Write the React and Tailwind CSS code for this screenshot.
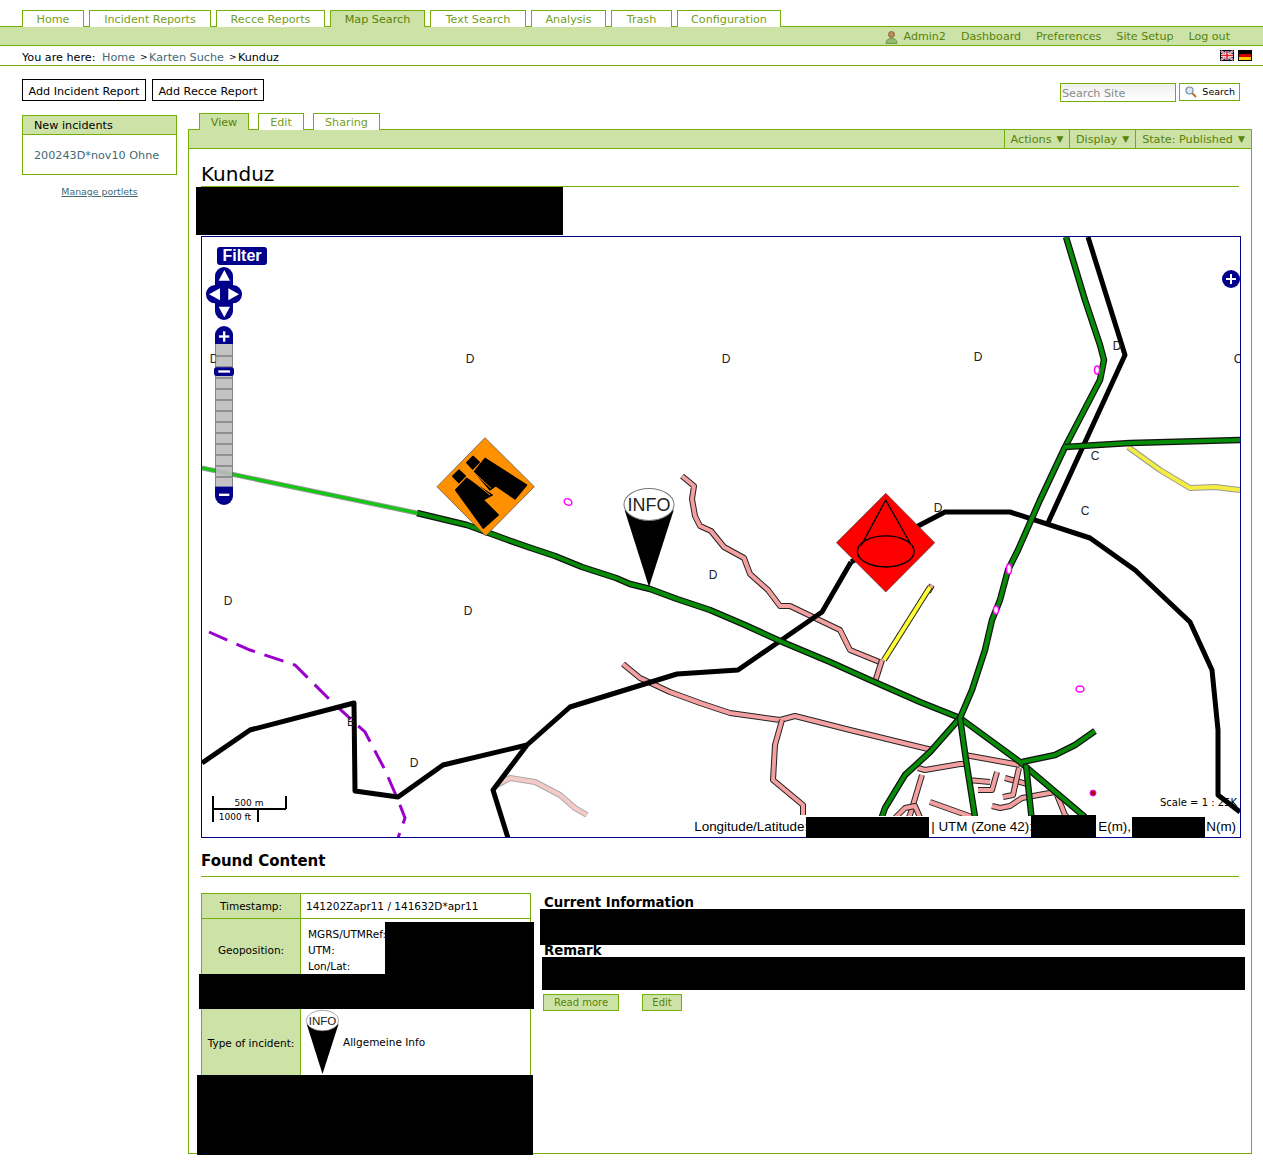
const mainTabs = [
  { label: 'Home', width: 'w-[62px]' },
  { label: 'Incident Reports', width: 'w-[122px]' },
  { label: 'Recce Reports', width: 'w-[109px]' },
  { label: 'Map Search', width: 'w-[95px]', active: true },
  { label: 'Text Search', width: 'w-[96px]' },
  { label: 'Analysis', width: 'w-[75px]' },
  { label: 'Trash', width: 'w-[61px]' },
  { label: 'Configuration', width: 'w-[104px]' },
]

const contentTabs = [
  { label: 'View', width: 'w-[50px]', active: true },
  { label: 'Edit', width: 'w-[46px]' },
  { label: 'Sharing', width: 'w-[67px]' },
]

const GREEN_ROADS = [
  '417,513 467,525 508,540 528,547 555,556 582,567 616,578 630,584 650,589 677,599 710,610 745,625 780,641 830,662 870,680 920,702 960,718',
  '960,718 1020,762 1085,817',
  '960,718 930,752 905,775 885,808 880,822',
  '960,718 966,760 975,817',
  '1066,237 1085,300 1100,345 1104,360 1100,380 1065,447 1040,500 1018,550 1008,570 1000,600 992,620 985,650 972,690 960,718',
  '1065,447 1130,443 1240,440',
  '1022,762 1055,755 1075,745 1095,731',
  '1026,765 1032,822',
]

const BLACK_ROADS = [
  '1088,237 1125,355 1047,525',
  '851,562 822,612 738,670 677,674 570,707 527,745 493,790 508,838',
  '527,745 443,765 398,797 355,791 354,703 250,730 202,763',
  '851,562 920,525 945,512 1010,512 1090,538 1135,570 1190,622 1212,670 1218,730 1218,795 1240,812',
]

const PINK_ROADS = [
  '682,476 694,486 692,499 695,516 700,526 711,531 724,547 744,558 750,574 768,590 780,606 790,606 815,618 840,630 850,650 882,663',
  '932,585 928,592',
  '882,660 875,682',
  '623,664 640,678 670,692 700,703 730,713 780,720 795,716 850,730 932,750',
  '782,720 775,745 773,780 803,805 803,815',
  '918,768 925,770 960,764 966,764',
  '965,755 1020,765',
  '968,780 990,782',
  '997,772 992,790 978,790',
  '1005,778 1027,784',
  '1019,768 1013,795 1003,797',
  '992,806 1000,808 1010,806 1022,798 1055,792',
  '1057,795 1065,815 1075,825',
  '922,775 910,815 905,825',
  '930,802 972,817',
  '895,818 905,808 915,806 922,822',
]

const LABELS = [
  ['D', 214, 363], ['D', 470, 363], ['D', 726, 363], ['D', 978, 361], ['D', 1117, 350],
  ['C', 1238, 363], ['C', 1095, 460], ['C', 1085, 515], ['D', 938, 512], ['D', 713, 579],
  ['D', 228, 605], ['D', 468, 615], ['E', 351, 726], ['D', 414, 767],
]

const Road = ({ points, casing, casingWidth = 6.5, color, width = 4 }) => (
  <>
    <polyline points={points} fill="none" stroke={casing} strokeWidth={casingWidth} strokeLinejoin="round" />
    <polyline points={points} fill="none" stroke={color} strokeWidth={width} strokeLinejoin="round" />
  </>
)

const InfoMarker = () => (
  <>
    <polygon points="-72,17 0,244 73,17" fill="#000" />
    <ellipse cx="0" cy="0" rx="74" ry="47" fill="#fff" stroke="#777" strokeWidth="3" />
    <text x="0" y="19" textAnchor="middle" fontSize="53" fill="#222" className="font-['Liberation_Sans',sans-serif]">INFO</text>
  </>
)

const MapControls = () => (
  <g transform="translate(195 235) scale(0.3333)" fill="#00008b">
    <rect x="60" y="96" width="54" height="159" rx="27" />
    <rect x="33" y="150" width="108" height="55" rx="27" />
    <g fill="#fff">
      <polygon points="88,105 105,137 71,137" />
      <polygon points="88,247 105,215 71,215" />
      <polygon points="42,178 75,160 75,196" />
      <polygon points="132,178 100,160 100,196" />
    </g>
    <rect x="62" y="320" width="50" height="440" fill="#bdbdbd" fillOpacity="0.9" stroke="#555" strokeWidth="2" />
    {[361, 394, 427, 460, 493, 526, 559, 592, 625, 658, 691, 724].map((y) => (
      <rect key={y} x="62" y={y} width="50" height="4" fill="#777" />
    ))}
    <rect x="60" y="273" width="54" height="54" rx="27" />
    <rect x="60" y="300" width="54" height="27" />
    <rect x="60" y="755" width="54" height="55" rx="27" />
    <rect x="60" y="755" width="54" height="27" />
    <rect x="57" y="397" width="60" height="26" rx="8" />
    <g fill="#fff">
      <rect x="72" y="301" width="31" height="7" />
      <rect x="84" y="289" width="7" height="31" />
      <rect x="70" y="406" width="35" height="7" />
      <rect x="72" y="776" width="31" height="7" />
    </g>
  </g>
)

const MapCanvas = () => (
  <svg viewBox="202 237 1038 600" className="block h-[600px] w-[1038px]" xmlns="http://www.w3.org/2000/svg">
    <polyline points="209,632 250,650 295,665 330,700 365,732 385,770 398,800 405,818 398,838" fill="none" stroke="#9900cc" strokeWidth="3" strokeDasharray="20 10" />
    {PINK_ROADS.map((points) => (
      <Road key={points} points={points} casing="#222" casingWidth={6} color="#f4a0a0" width={4} />
    ))}
    <Road points="497,785 510,778 535,782 560,795 575,808 587,815" casing="#aaa" casingWidth={6} color="#f6c9c9" width={4} />
    <Road points="930,587 884,660" casing="#222" casingWidth={6} color="#ffff33" width={4} />
    <Road points="1128,447 1160,470 1190,488 1215,487 1240,490" casing="#999" casingWidth={6} color="#f5ee40" width={4} />
    {BLACK_ROADS.map((points) => (
      <polyline key={points} points={points} fill="none" stroke="#000" strokeWidth="5" strokeLinejoin="round" />
    ))}
    {GREEN_ROADS.map((points) => (
      <Road key={points} points={points} casing="#111" color="#078c07" />
    ))}
    <Road points="202,468 417,513" casing="#999" casingWidth={5} color="#12c812" width={3} />

    <g fill="#fff" stroke="#f0f" strokeWidth="1.5">
      <ellipse cx="568" cy="502" rx="4" ry="3" transform="rotate(30 568 502)" />
      <ellipse cx="1080" cy="689" rx="4" ry="3" />
      <ellipse cx="1097" cy="370" rx="2.5" ry="4" />
      <ellipse cx="1009" cy="569" rx="2.5" ry="5" />
      <ellipse cx="996" cy="610" rx="2.5" ry="4" />
    </g>
    <circle cx="1093" cy="793" r="3" fill="#a01010" stroke="#f0f" />

    {LABELS.map(([text, x, y]) => (
      <text key={`${x}-${y}`} x={x} y={y} textAnchor="middle" fontSize="12" fill="#222" className="font-['Liberation_Sans',sans-serif]">{text}</text>
    ))}

    {/* orange binoculars sign */}
    <g transform="translate(435 435) scale(0.3333)">
      <polygon points="150,8 298,155 152,303 6,155" fill="#ff9000" stroke="#444" strokeWidth="2" />
      <g fill="#000" stroke="#000" strokeWidth="4" strokeLinejoin="round">
        <polygon points="114,64 133,82 113,102 95,83" />
        <polygon points="72,105 91,123 72,143 53,124" />
        <polygon points="150,70 275,150 240,192 182,152 165,165 118,110" />
        <polygon points="95,130 62,165 145,280 190,240 145,195 172,180" />
      </g>
      <g stroke="#ff9000" strokeWidth="3">
        <line x1="97" y1="125" x2="165" y2="180" />
        <line x1="112" y1="108" x2="168" y2="160" />
      </g>
    </g>

    {/* red cone sign */}
    <g transform="translate(420 424) scale(0.338)">
      <polygon points="1378,205 1523,351 1378,497 1232,351" fill="#ff0000" stroke="#444" strokeWidth="2" />
      <g fill="none" stroke="#000" strokeWidth="4">
        <polyline points="1305,360 1378,225 1450,352" />
        <ellipse cx="1378" cy="377" rx="84" ry="46" />
      </g>
    </g>

    <g transform="translate(649 504.5) scale(0.338)">
      <InfoMarker />
    </g>

    <MapControls />

    <circle cx="1231" cy="279" r="9" fill="#00008b" />
    <rect x="1226" y="278" width="10" height="2" fill="#fff" />
    <rect x="1230" y="274" width="2" height="10" fill="#fff" />

    <g stroke="#000" strokeWidth="2" fill="none">
      <polyline points="213,822 213,796" />
      <polyline points="213,809 286,809" />
      <polyline points="286,796 286,809" />
      <polyline points="258,809 258,822" />
    </g>
    <text x="249" y="806" textAnchor="middle" fontSize="9" fill="#000" className="font-['DejaVu_Sans',sans-serif]">500 m</text>
    <text x="235" y="820" textAnchor="middle" fontSize="9" fill="#000" className="font-['DejaVu_Sans',sans-serif]">1000 ft</text>
  </svg>
)

const Redact = ({ className }) => <div className={`absolute z-20 bg-black ${className}`} />

const UserIcon = () => (
  <svg viewBox="0 0 13 13" className="mr-[6px] h-[13px] w-[13px]">
    <circle cx="6.5" cy="3.5" r="3" fill="#c08a5a" stroke="#6a4a2a" strokeWidth="0.7" />
    <path d="M1 12.5c0-3.5 2-5 5.5-5s5.5 1.5 5.5 5z" fill="#8fbf6a" stroke="#5d7a45" strokeWidth="0.7" />
  </svg>
)

const UkFlag = () => (
  <svg viewBox="0 0 14 11" className="h-[11px] w-[14px]">
    <rect width="14" height="11" fill="#000" />
    <rect x="1" y="1" width="12" height="9" fill="#27307f" />
    <path d="M1 1l12 9M13 1L1 10" stroke="#fff" strokeWidth="2" />
    <path d="M1 1l12 9M13 1L1 10" stroke="#d22" strokeWidth="0.7" />
    <path d="M7 1v9M1 5.5h12" stroke="#fff" strokeWidth="3" />
    <path d="M7 1v9M1 5.5h12" stroke="#d22" strokeWidth="1.6" />
  </svg>
)

const DeFlag = () => (
  <svg viewBox="0 0 14 11" className="h-[11px] w-[14px]">
    <rect width="14" height="11" fill="#000" />
    <rect x="1" y="4" width="12" height="3" fill="#d40000" />
    <rect x="1" y="7" width="12" height="3" fill="#ffce00" />
  </svg>
)

const SearchGlyph = () => (
  <svg viewBox="0 0 12 12" className="h-[12px] w-[12px]">
    <line x1="7" y1="7" x2="11" y2="11" stroke="#c07020" strokeWidth="2" />
    <circle cx="4.5" cy="4.5" r="3.5" fill="#dce8f5" stroke="#7a8ea5" strokeWidth="1.2" />
  </svg>
)

const MenuCell = ({ children, width }) => (
  <div className={`flex h-full items-center justify-center border-l border-[#74ae0b] pt-[2px] text-[#578308] ${width}`}>
    {children} <span className="ml-[5px] text-[9px]">▼</span>
  </div>
)

const App = () => {
  return (
    <div className="relative h-[1165px] w-[1263px] overflow-hidden bg-white font-['DejaVu_Sans',Verdana,sans-serif] text-[11.2px] text-black">
      <nav className="flex gap-[5px] pl-[22px] pt-[10px]">
        {mainTabs.map((tab) => (
          <a
            key={tab.label}
            className={`relative z-10 flex h-[17px] items-center justify-center border border-b-0 border-[#74ae0b] pt-[2px] ${tab.width} ${
              tab.active ? 'bg-[#cde2a7] text-[#578308]' : 'bg-white text-[#74a01a]'
            }`}
          >
            {tab.label}
          </a>
        ))}
      </nav>

      <div className="-mt-px flex h-[20px] items-center justify-end gap-[15px] border-y border-[#74ae0b] bg-[#cde2a7] pr-[33px] pt-[2px] text-[11.1px] text-[#578308]">
        <span className="flex items-center">
          <UserIcon />
          Admin2
        </span>
        <span>Dashboard</span>
        <span>Preferences</span>
        <span>Site Setup</span>
        <span>Log out</span>
      </div>

      <div className="flex h-[20px] items-center justify-between border-b border-[#74ae0b] pl-[22px] pr-[11px]">
        <div className="flex items-center gap-[5px] pt-[5px]">
          <span className="w-[75px]">You are here:</span>
          <a className="text-[#436976]">Home</a>
          <span className="w-[4px] text-[9px]">&gt;</span>
          <a className="text-[#436976]">Karten Suche</a>
          <span className="w-[4px] text-[9px]">&gt;</span>
          <span>Kunduz</span>
        </div>
        <div className="flex gap-[4px]">
          <UkFlag />
          <DeFlag />
        </div>
      </div>

      <div className="flex h-[47px] justify-between pl-[22px] pr-[23px]">
        <div className="mt-[13px] flex gap-[6px]">
          <button className="h-[22px] w-[124px] border border-black bg-white pt-[4px]">Add Incident Report</button>
          <button className="h-[22px] w-[112px] border border-black bg-white pt-[4px]">Add Recce Report</button>
        </div>
        <div className="mt-[17px] flex gap-[3px]">
          <input
            placeholder="Search Site"
            className="h-[19px] w-[116px] border border-[#74ae0b] bg-gradient-to-b from-[#eeeeee] to-white px-px pt-[2px] text-[11.2px] outline-none placeholder:text-[#8a8a8a]"
          />
          <button className="flex h-[18px] w-[61px] items-center justify-between border border-[#74ae0b] bg-white pl-[5px] pr-[4px] text-[9.5px]">
            <SearchGlyph />
            <span className="pt-px">Search</span>
          </button>
        </div>
      </div>

      <div className="flex pl-[22px]">
        <aside className="mt-[2px] w-[155px]">
          <div className="border border-[#74ae0b]">
            <div className="flex h-[19px] items-center border-b border-[#74ae0b] bg-[#cde2a7] pl-[11px] pt-[2px]">New incidents</div>
            <div className="flex h-[39px] items-center pl-[11px] pt-[3px] text-[#436976]">200243D*nov10 Ohne</div>
          </div>
          <a className="mt-[10px] block text-center text-[9.4px] text-[#436976] underline">Manage portlets</a>
        </aside>

        <main className="ml-[11px] w-[1064px]">
          <div className="flex gap-[9px] pl-[11px]">
            {contentTabs.map((tab) => (
              <a
                key={tab.label}
                className={`relative z-10 flex h-[17px] items-center justify-center border border-b-0 border-[#74ae0b] pt-[2px] ${tab.width} ${
                  tab.active ? 'bg-[#cde2a7] text-[#578308]' : 'bg-white text-[#74a01a]'
                }`}
              >
                {tab.label}
              </a>
            ))}
          </div>

          <div className="-mt-px flex h-[20px] items-center justify-end border border-[#74ae0b] bg-[#cde2a7]">
            <MenuCell width="w-[65px]">Actions</MenuCell>
            <MenuCell width="w-[66px]">Display</MenuCell>
            <MenuCell width="w-[116px]">State: Published</MenuCell>
          </div>

          <div className="h-[1005px] border-x border-b border-[#74ae0b] px-[12px] pt-[10px]">
            <h1 className="h-[28px] border-b border-[#74ae0b] text-[20px] leading-[30px]">Kunduz</h1>

            <div className="relative mt-[49px] w-[1040px] border border-[#00008b]">
              <MapCanvas />
              <div className="absolute left-[15px] top-[10px] flex h-[18px] w-[50px] items-center justify-center rounded-[3px] bg-[#00008b] font-['Liberation_Sans',sans-serif] text-[16px] font-bold text-white">
                Filter
              </div>
              <div className="absolute right-[3px] top-[558px] text-[10px]">Scale = 1 : 25K</div>
              <div className="absolute bottom-0 right-0 flex h-[21px] items-center whitespace-nowrap bg-white pr-[4px] pt-[2px] font-['Liberation_Sans',sans-serif] text-[13.4px]">
                <span className="w-[112px] shrink-0">Longitude/Latitude:</span>
                <span className="w-[125px] shrink-0" />
                <span className="w-[100px] shrink-0">| UTM (Zone 42):</span>
                <span className="w-[67px] shrink-0" />
                <span className="w-[34px] shrink-0">E(m),</span>
                <span className="w-[74px] shrink-0" />
                <span>N(m)</span>
              </div>
            </div>

            <h2 className="mt-[10px] h-[29px] border-b border-[#74ae0b] text-[15px] font-bold leading-[26px]">Found Content</h2>

            <div className="mt-[16px] flex text-[10.5px]">
              <div className="w-[330px] border border-[#74ae0b]">
                <div className="flex h-[25px] border-b border-[#74ae0b]">
                  <div className="flex w-[99px] items-center justify-center border-r border-[#74ae0b] bg-[#cde2a7] pt-[2px]">Timestamp:</div>
                  <div className="flex items-center pl-[5px] pt-[2px]">141202Zapr11 / 141632D*apr11</div>
                </div>
                <div className="flex h-[89px] border-b border-[#74ae0b]">
                  <div className="flex w-[99px] justify-center border-r border-[#74ae0b] bg-[#cde2a7] pt-[24px]">Geoposition:</div>
                  <div className="flex flex-col pl-[7px] pt-[7px] leading-[16px]">
                    <span>MGRS/UTMRef:</span>
                    <span>UTM:</span>
                    <span>Lon/Lat:</span>
                  </div>
                </div>
                <div className="flex h-[70px]">
                  <div className="flex w-[99px] items-center justify-center border-r border-[#74ae0b] bg-[#cde2a7] pt-[2px]">Type of incident:</div>
                  <div className="flex items-center pl-[4px]">
                    <svg viewBox="-80 -52 160 300" className="mb-[2px] h-[66px] w-[35px]">
                      <InfoMarker />
                    </svg>
                    <span className="ml-[3px]">Allgemeine Info</span>
                  </div>
                </div>
              </div>

              <div className="ml-[13px] flex-1">
                <h3 className="h-[50px] text-[13.3px] font-bold leading-[20px]">Current Information</h3>
                <h3 className="h-[51px] text-[13.3px] font-bold leading-[16px]">Remark</h3>
                <div className="ml-[-1px] flex gap-[23px] text-[10px]">
                  <a className="flex h-[17px] w-[76px] items-center justify-center border border-[#74ae0b] bg-[#cde2a7] text-[#578308]">Read more</a>
                  <a className="flex h-[17px] w-[40px] items-center justify-center border border-[#74ae0b] bg-[#cde2a7] text-[#578308]">Edit</a>
                </div>
              </div>
            </div>
          </div>
        </main>
      </div>

      {/* blacked-out parts of the screenshot */}
      <Redact className="left-[196px] top-[187px] h-[48px] w-[367px]" />
      <Redact className="left-[806px] top-[817px] h-[21px] w-[123px]" />
      <Redact className="left-[1031px] top-[815px] h-[23px] w-[65px]" />
      <Redact className="left-[1132px] top-[817px] h-[21px] w-[73px]" />
      <Redact className="left-[385px] top-[922px] h-[52px] w-[149px]" />
      <Redact className="left-[199px] top-[974px] h-[35px] w-[335px]" />
      <Redact className="left-[197px] top-[1075px] h-[80px] w-[336px]" />
      <Redact className="left-[540px] top-[909px] h-[36px] w-[705px]" />
      <Redact className="left-[542px] top-[957px] h-[33px] w-[703px]" />
    </div>
  )
}

export default App
